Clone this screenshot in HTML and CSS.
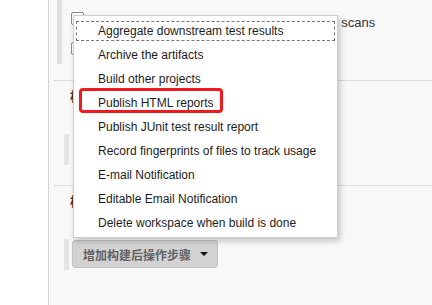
FILE: index.html
```html
<!DOCTYPE html>
<html lang="zh-CN">
<head>
    <meta charset="UTF-8">
    <title>构建后操作</title>
    <link rel="stylesheet" href="styles.css">
</head>
<body>
    <div class="page">
        <div class="side"></div>
        <div class="main">
            <div class="opts">
                <div class="opt-row"><span class="chk"></span><span class="opt-label">Run the analysis after all static source code scans</span></div>
                <div class="opt-row"><span class="chk"></span><span class="opt-label">Use custom workspace</span></div>
            </div>

            <div class="sec">
                <div class="sec-title">构建环境</div>
                <div class="sec-bar"></div>
            </div>

            <div class="sec">
                <div class="sec-title">构建后操作</div>
                <div class="sec-bar">
                    <button class="add-btn">增加构建后操作步骤 <span class="caret"></span></button>
                </div>
            </div>
        </div>

        <ul class="menu">
            <li class="focused">Aggregate downstream test results</li>
            <li>Archive the artifacts</li>
            <li>Build other projects</li>
            <li>Publish HTML reports</li>
            <li>Publish JUnit test result report</li>
            <li>Record fingerprints of files to track usage</li>
            <li>E-mail Notification</li>
            <li>Editable Email Notification</li>
            <li>Delete workspace when build is done</li>
        </ul>
        <div class="mark"></div>
    </div>
</body>
</html>
```

FILE: styles.css
```css
body { margin: 0; font-family: "Liberation Sans", Arial, "Noto Sans CJK SC", sans-serif; font-size: 13px; color: #222; }
.page { position: relative; display: flex; width: 432px; height: 305px; overflow: hidden; }
.side { width: 48px; background: #fff; border-right: 1px solid #d2d2d2; }
.main { flex: 1; background: #f8f8f8; padding-left: 5px; }

.opts { margin-left: 3px; border-left: 5px solid #e0e0e0; height: 64px; box-sizing: border-box; padding: 12px 0 0 9px; }
.opt-row { display: flex; height: 30px; align-items: flex-start; white-space: nowrap; }
.chk { display: inline-block; width: 11px; height: 11px; border: 1px solid #8a8a8a; border-radius: 2px; background: #fff; }
.opt-label { margin-left: 3px; padding-top: 3px; line-height: 16px; color: #333; }

.sec { border-top: 1px solid #dcdcdc; margin-top: 16px; padding-bottom: 20px; }
.sec + .sec { margin-top: 0; }
.sec-title { padding: 8px 0 0 16px; line-height: 16px; font-weight: bold; font-size: 13px; color: #333; }
.sec-bar { margin: 29px 0 0 10px; height: 31px; border-left: 5px solid #e4e4e4; display: flex; align-items: flex-start; }

.add-btn { margin: 1px 0 0 3px; height: 28px; padding: 0 9px 0 10px; background: #d2d2d2; border: 1px solid #c4c4c4; border-radius: 3px; font-family: "Noto Sans CJK SC", sans-serif; font-size: 12px; font-weight: bold; color: #626262; display: flex; align-items: center; }
.caret { display: inline-block; margin-left: 9px; width: 0; height: 0; border-left: 4px solid transparent; border-right: 4px solid transparent; border-top: 4px solid #111; }

.menu { position: absolute; left: 73px; top: 15px; width: 265px; height: 223px; box-sizing: border-box; margin: 0; padding: 3px 0; list-style: none; background: #fff; border: 1px solid #cfcfcf; box-shadow: 2px 3px 6px rgba(0, 0, 0, 0.22); }
.menu li { height: 24px; line-height: 24px; padding-left: 24px; white-space: nowrap; font-size: 12px; color: #1c1c1c; }
.menu li.focused { outline: 1px dashed #777; outline-offset: -3px; }
.mark { position: absolute; left: 79px; top: 88px; width: 144px; height: 25px; box-sizing: border-box; border: 3px solid #f0191c; border-radius: 4px; }
```
